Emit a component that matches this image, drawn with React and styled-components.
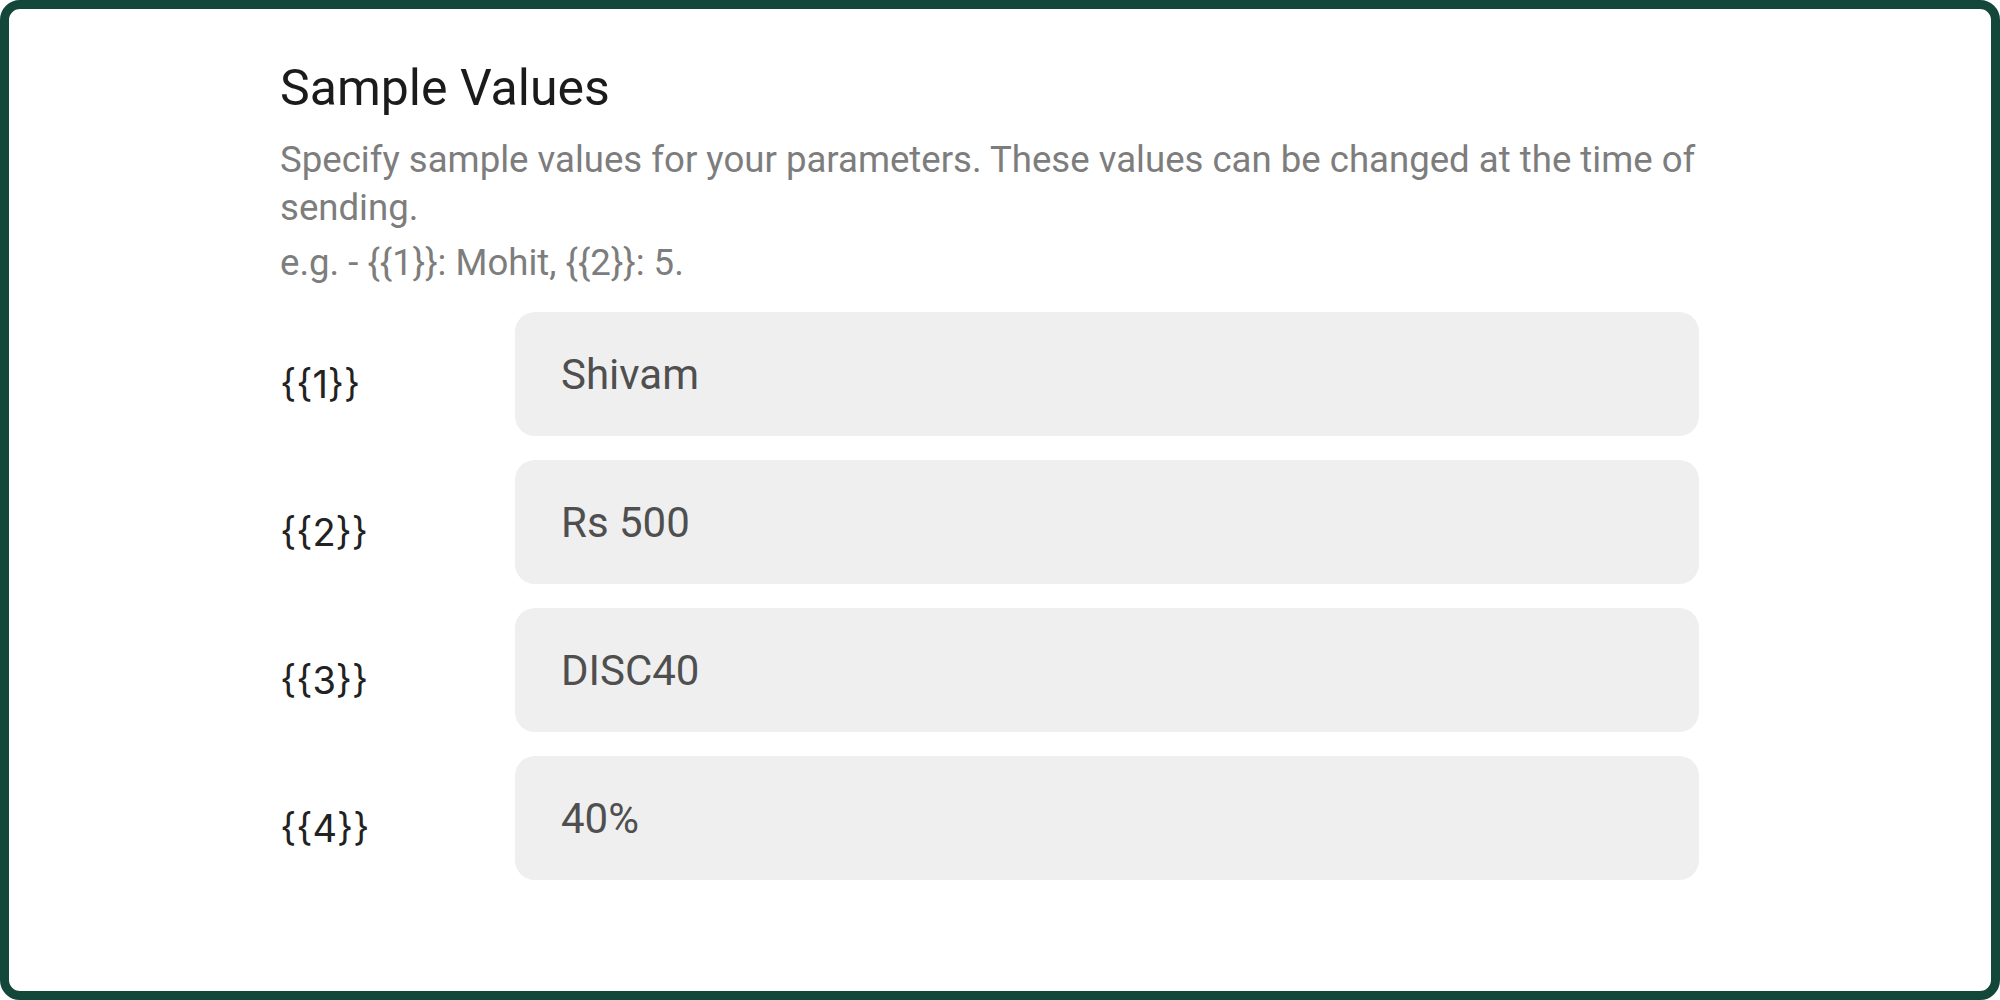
import React from "react";
import styled, { createGlobalStyle } from "styled-components";

const GlobalStyle = createGlobalStyle`
  html, body {
    margin: 0;
    padding: 0;
    background: #ffffff;
  }
  body {
    font-family: Roboto, "Liberation Sans", sans-serif;
  }
`;

const Frame = styled.div`
  width: 2000px;
  height: 1000px;
  box-sizing: border-box;
  border: 9px solid #13473a;
  border-radius: 20px;
  background: #ffffff;
  padding: 49px 0 0 271px;
`;

const Section = styled.section`
  width: 1419px;
  display: flex;
  flex-direction: column;
`;

const Title = styled.h2`
  margin: 0;
  font-family: Roboto, sans-serif;
  font-weight: 400;
  font-size: 50px;
  line-height: 60px;
  color: #1b1b1b;
`;

const Hint = styled.p`
  margin: ${(props) => props.$gap || 0}px 0 0;
  font-family: Roboto, sans-serif;
  font-size: 36.6px;
  line-height: 48px;
  color: #7d7d7d;
`;

const Fields = styled.div`
  margin-top: 25px;
  display: grid;
  grid-template-columns: 235px 1fr;
  row-gap: 24px;
`;

const Label = styled.label`
  display: flex;
  align-items: center;
  padding-top: 20px;
  font-family: Inter, Roboto, sans-serif;
  font-size: 38px;
  color: #222222;
`;

const ValueInput = styled.input`
  height: 124px;
  box-sizing: border-box;
  border: none;
  outline: none;
  border-radius: 20px;
  background: #efefef;
  padding: 0 46px;
  font-family: Roboto, sans-serif;
  font-size: 42px;
  color: #4f4f4f;
`;

const samples = [
  { key: "{{1}}", value: "Shivam" },
  { key: "{{2}}", value: "Rs 500" },
  { key: "{{3}}", value: "DISC40" },
  { key: "{{4}}", value: "40%" },
];

export default function App() {
  return (
    <>
      <GlobalStyle />
      <Frame>
        <Section>
          <Title>Sample Values</Title>
          <Hint $gap={18}>
            Specify sample values for your parameters. These values can be
            changed at the time of sending.
          </Hint>
          <Hint $gap={7}>e.g. - {"{{1}}"}: Mohit, {"{{2}}"}: 5.</Hint>
          <Fields>
            {samples.map((s) => (
              <React.Fragment key={s.key}>
                <Label>{s.key}</Label>
                <ValueInput readOnly defaultValue={s.value} />
              </React.Fragment>
            ))}
          </Fields>
        </Section>
      </Frame>
    </>
  );
}
